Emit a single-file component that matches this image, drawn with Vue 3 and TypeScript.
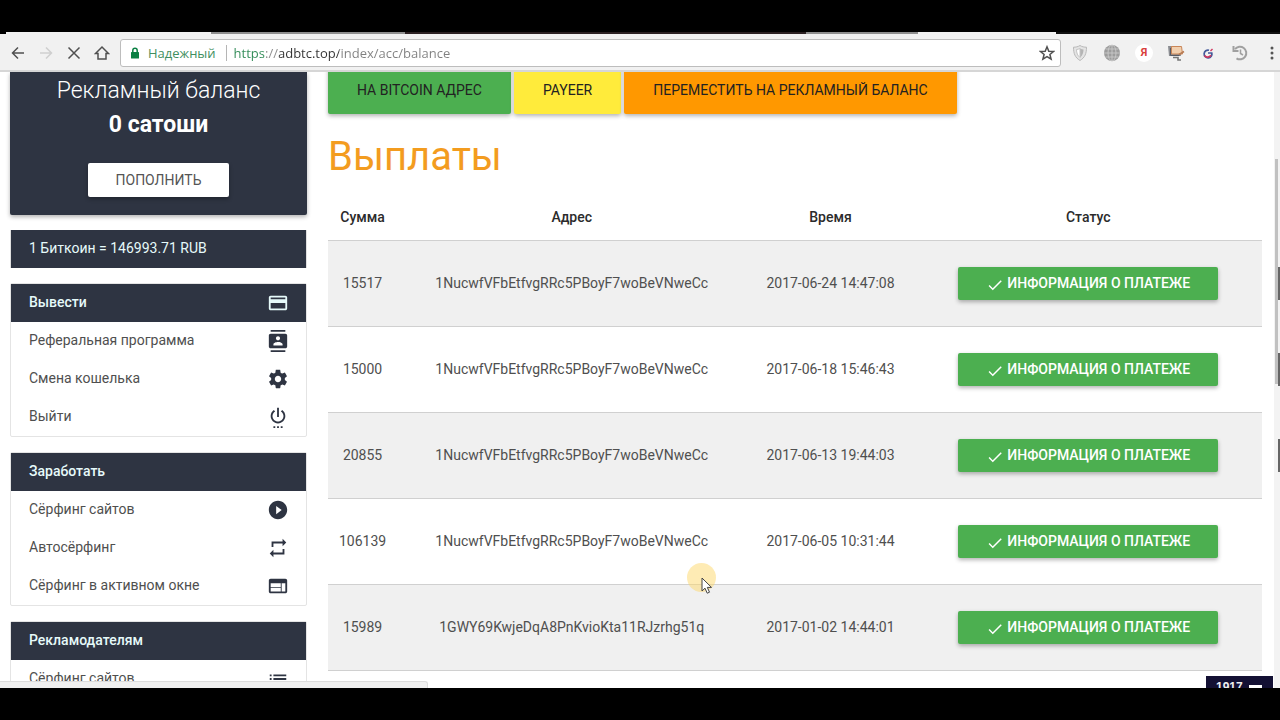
<script setup lang="ts">
import { ref } from 'vue'

interface MenuItem {
  label: string
  icon: string
}
interface MenuGroup {
  title: string
  icon?: string
  items: MenuItem[]
}
interface Payout {
  amount: string
  address: string
  time: string
}

const url = ref('https://adbtc.top/index/acc/balance')

const icons: Record<string, string> = {
  card: 'M20 4H4c-1.11 0-1.99.89-1.99 2L2 18c0 1.11.89 2 2 2h16c1.11 0 2-.89 2-2V6c0-1.11-.89-2-2-2zm0 14H4v-6h16v6zm0-10H4V6h16v2z',
  contacts: 'M20 0H4v2h16V0zM4 24h16v-2H4v2zM20 4H4c-1.1 0-2 .9-2 2v12c0 1.1.9 2 2 2h16c1.1 0 2-.9 2-2V6c0-1.1-.9-2-2-2zm-8 2.75c1.24 0 2.25 1.01 2.25 2.25s-1.01 2.25-2.25 2.25S9.75 10.24 9.75 9 10.76 6.75 12 6.75zM17 17H7v-1.5c0-1.67 3.33-2.5 5-2.5s5 .83 5 2.5V17z',
  settings: 'M19.43 12.98c.04-.32.07-.64.07-.98s-.03-.66-.07-.98l2.11-1.65c.19-.15.24-.42.12-.64l-2-3.46c-.12-.22-.39-.3-.61-.22l-2.49 1c-.52-.4-1.08-.73-1.69-.98l-.38-2.65C14.46 2.18 14.25 2 14 2h-4c-.25 0-.46.18-.49.42l-.38 2.65c-.61.25-1.17.59-1.69.98l-2.49-1c-.23-.09-.49 0-.61.22l-2 3.46c-.13.22-.07.49.12.64l2.11 1.65c-.04.32-.07.65-.07.98s.03.66.07.98l-2.11 1.65c-.19.15-.24.42-.12.64l2 3.46c.12.22.39.3.61.22l2.49-1c.52.4 1.08.73 1.69.98l.38 2.65c.03.24.24.42.49.42h4c.25 0 .46-.18.49-.42l.38-2.65c.61-.25 1.17-.59 1.69-.98l2.49 1c.23.09.49 0 .61-.22l2-3.46c.12-.22.07-.49-.12-.64l-2.11-1.65zM12 15.5c-1.93 0-3.5-1.57-3.5-3.5s1.57-3.5 3.5-3.5 3.5 1.57 3.5 3.5-1.57 3.5-3.5 3.5z',
  power: 'M7 24h2v-2H7v2zm4 0h2v-2h-2v2zm2-22h-2v10h2V2zm3.56 2.44l-1.45 1.45C16.84 6.94 18 8.83 18 11c0 3.31-2.69 6-6 6s-6-2.69-6-6c0-2.17 1.16-4.06 2.88-5.12L7.44 4.44C5.36 5.88 4 8.28 4 11c0 4.42 3.58 8 8 8s8-3.58 8-8c0-2.72-1.36-5.12-3.44-6.56zM15 24h2v-2h-2v2z',
  play: 'M12 2C6.48 2 2 6.48 2 12s4.48 10 10 10 10-4.48 10-10S17.52 2 12 2zm-2 14.5v-9l6 4.5-6 4.5z',
  repeat: 'M7 7h10v3l4-4-4-4v3H5v6h2V7zm10 10H7v-3l-4 4 4 4v-3h12v-6h-2v4z',
  web: 'M20 4H4c-1.1 0-1.99.9-1.99 2L2 18c0 1.1.9 2 2 2h16c1.1 0 2-.9 2-2V6c0-1.1-.9-2-2-2zm-5 14H4v-4h11v4zm0-5H4V9h11v4zm5 5h-4V9h4v9z',
  list: 'M3 13h2v-2H3v2zm0 4h2v-2H3v2zm0-8h2V7H3v2zm4 4h14v-2H7v2zm0 4h14v-2H7v2zM7 7v2h14V7H7z',
}

const groups: MenuGroup[] = [
  {
    title: 'Вывести',
    icon: 'card',
    items: [
      { label: 'Реферальная программа', icon: 'contacts' },
      { label: 'Смена кошелька', icon: 'settings' },
      { label: 'Выйти', icon: 'power' },
    ],
  },
  {
    title: 'Заработать',
    items: [
      { label: 'Сёрфинг сайтов', icon: 'play' },
      { label: 'Автосёрфинг', icon: 'repeat' },
      { label: 'Сёрфинг в активном окне', icon: 'web' },
    ],
  },
  {
    title: 'Рекламодателям',
    items: [{ label: 'Сёрфинг сайтов', icon: 'list' }],
  },
]

const payouts: Payout[] = [
  { amount: '15517', address: '1NucwfVFbEtfvgRRc5PBoyF7woBeVNweCc', time: '2017-06-24 14:47:08' },
  { amount: '15000', address: '1NucwfVFbEtfvgRRc5PBoyF7woBeVNweCc', time: '2017-06-18 15:46:43' },
  { amount: '20855', address: '1NucwfVFbEtfvgRRc5PBoyF7woBeVNweCc', time: '2017-06-13 19:44:03' },
  { amount: '106139', address: '1NucwfVFbEtfvgRRc5PBoyF7woBeVNweCc', time: '2017-06-05 10:31:44' },
  { amount: '15989', address: '1GWY69KwjeDqA8PnKvioKta11RJzrhg51q', time: '2017-01-02 14:44:01' },
]
</script>

<template>
  <div class="screen">
    <div class="browser">
      <div class="tabs-edge"></div>
      <header class="toolbar">
        <nav class="nav" aria-label="Навигация">
          <button class="tool" type="button" aria-label="Назад">
            <svg viewBox="0 0 16 16"><path d="M14 8H2.500M8 2.500 2.500 8 8 13.500" /></svg>
          </button>
          <button class="tool faded" type="button" aria-label="Вперёд">
            <svg viewBox="0 0 16 16"><path d="M2 8h11.500M8 2.500 13.500 8 8 13.500" /></svg>
          </button>
          <button class="tool" type="button" aria-label="Остановить">
            <svg viewBox="0 0 16 16"><path d="M2.500 2.500 13.500 13.500M13.500 2.500 2.500 13.500" /></svg>
          </button>
          <button class="tool" type="button" aria-label="Главная">
            <svg viewBox="0 0 16 16"><path d="M1.500 8.500 8 2l6.500 6.500H12V14H4V8.500z" /></svg>
          </button>
        </nav>
        <div class="omnibox">
          <svg class="lock" viewBox="0 0 10 12">
            <path d="M2.800 5.500V3.500a2.200 2.200 0 0 1 4.400 0v2" fill="none" stroke="#0b8043" stroke-width="1.500" />
            <rect x="1" y="5" width="8" height="6.500" rx="0.500" fill="#0b8043" />
          </svg>
          <span class="secure">Надежный</span>
          <input v-model="url" class="url" type="text" aria-label="Адрес страницы" />
          <button class="tool" type="button" aria-label="Добавить в закладки">
            <svg viewBox="0 0 16 16"><path d="M8 1.800 9.800 6.200 14.500 6.500 10.900 9.500 12.100 14.200 8 11.600 3.900 14.200 5.100 9.500 1.500 6.500 6.200 6.200z" /></svg>
          </button>
        </div>
        <div class="extensions">
          <button class="ext" type="button" aria-label="Щит">
            <svg viewBox="0 0 18 18">
              <path d="M9 1.500c2 1.300 4.200 1.700 6.500 1.700 0 6.300-1.500 10.300-6.500 13.300C4 13.500 2.500 9.500 2.500 3.200 4.800 3.200 7 2.800 9 1.500z" fill="#e4e4e4" stroke="#b9b9b9" />
              <path d="M9 4.500c1.200.6 2.400.9 3.500 1 0 3.500-1 6-3.500 8z" fill="#b4b4b4" />
              <path d="M9 4.500c-1.200.6-2.400.9-3.500 1 0 3.500 1 6 3.500 8z" fill="#fff" stroke="#c4c4c4" />
            </svg>
          </button>
          <button class="ext" type="button" aria-label="Прокси">
            <svg viewBox="0 0 18 18">
              <circle cx="9" cy="9" r="8" fill="#9c9c9c" />
              <g fill="none" stroke="#c9c9c9" stroke-width="0.900">
                <ellipse cx="9" cy="9" rx="4" ry="8" />
                <path d="M9 1v16M1 9h16M2.500 5h13M2.500 13h13" />
              </g>
            </svg>
          </button>
          <button class="ext yandex" type="button">Я</button>
          <button class="ext" type="button" aria-label="Экран">
            <svg viewBox="0 0 18 18">
              <path d="M1 2h12l1 10H2z" fill="#8b8d92" />
              <path d="M4.500 2.500h10l1 7.500h-11z" fill="#f1cfae" stroke="#c98557" />
              <path d="M3.500 4v7.500h9" fill="none" stroke="#555b66" />
              <path d="M12 10.500 17 7.500" stroke="#b77b54" stroke-width="1.500" />
              <path d="M6 13.500h5v2.500h3" fill="none" stroke="#777" stroke-width="1.600" />
            </svg>
          </button>
          <button class="ext" type="button" aria-label="Расширение">
            <svg viewBox="0 0 18 18">
              <path d="M10 6.200A3.900 3.900 0 1 0 12.800 9H9" fill="none" stroke="#43599a" stroke-width="1.700" />
              <path d="M5.500 11.500A4 4 0 0 0 12 11.300" fill="none" stroke="#d1365f" stroke-width="1.700" />
              <path d="M11.500 7 13.500 5" stroke="#d1365f" stroke-width="1.500" />
            </svg>
          </button>
          <button class="ext" type="button" aria-label="История">
            <svg viewBox="0 0 18 18" fill="none" stroke="#a0a0a0" stroke-width="2">
              <path d="M4 5.200A6.300 6.300 0 1 1 5.500 14.300" />
              <path d="M2.500 2v5h5" />
              <path d="M9.500 5.500V9.500l2.500 1.500" stroke-width="1.500" />
            </svg>
          </button>
          <button class="ext" type="button" aria-label="Меню">
            <svg viewBox="0 0 18 18" fill="#555">
              <circle cx="9" cy="4" r="1.500" /><circle cx="9" cy="9" r="1.500" /><circle cx="9" cy="14" r="1.500" />
            </svg>
          </button>
        </div>
      </header>

      <div class="viewport">
        <div class="page">
          <aside class="sidebar">
            <section class="balance">
              <h2>Рекламный баланс</h2>
              <strong>0 сатоши</strong>
              <button class="refill" type="button">ПОПОЛНИТЬ</button>
            </section>
            <p class="rate">1 Биткоин = 146993.71 RUB</p>
            <nav v-for="group in groups" :key="group.title" class="menu">
              <h3 class="menu-head">
                <a class="label" href="#">{{ group.title }}</a>
                <svg v-if="group.icon" viewBox="0 0 24 24"><path :d="icons[group.icon]" /></svg>
              </h3>
              <a v-for="item in group.items" :key="item.label" class="menu-item" href="#">
                <span class="label">{{ item.label }}</span>
                <svg viewBox="0 0 24 24"><path :d="icons[item.icon]" /></svg>
              </a>
            </nav>
          </aside>

          <main class="content">
            <div class="actions">
              <button class="action green" type="button">НА BITCOIN АДРЕС</button>
              <button class="action yellow" type="button">PAYEER</button>
              <button class="action orange" type="button">ПЕРЕМЕСТИТЬ НА РЕКЛАМНЫЙ БАЛАНС</button>
            </div>
            <h1>Выплаты</h1>
            <table>
              <thead>
                <tr>
                  <th class="c-amount">Сумма</th>
                  <th class="c-address">Адрес</th>
                  <th class="c-time">Время</th>
                  <th>Статус</th>
                </tr>
              </thead>
              <tbody>
                <tr v-for="row in payouts" :key="row.time">
                  <td>{{ row.amount }}</td>
                  <td>{{ row.address }}</td>
                  <td>{{ row.time }}</td>
                  <td>
                    <button class="info" type="button">
                      <svg viewBox="0 0 24 24"><path d="M9 16.200L4.800 12l-1.400 1.400L9 19 21 7l-1.400-1.400L9 16.200z" /></svg>
                      <span>ИНФОРМАЦИЯ О ПЛАТЕЖЕ</span>
                    </button>
                  </td>
                </tr>
              </tbody>
            </table>
          </main>
        </div>

        <div class="scrollbar"><div class="thumb"></div></div>
        <div class="edge"><i v-for="n in 3" :key="n"></i></div>
        <div class="status"></div>
        <div class="counter"><span>1917</span><i></i></div>
        <div class="pointer">
          <svg viewBox="0 0 12 18"><path d="M1 1v13l3-2.800 2.200 5 2.300-1-2.200-4.800h4.200z" /></svg>
        </div>
      </div>
    </div>
  </div>
</template>

<style>
body {
  background: #000;
}
</style>

<style scoped>
* {
  box-sizing: border-box;
}
button {
  margin: 0;
  padding: 0;
  border: 0;
  background: none;
  font: inherit;
  color: inherit;
}
a {
  color: inherit;
  text-decoration: none;
}
.screen {
  height: 100vh;
  padding: 32px 0;
  background: #000;
  font-family: Roboto, "Liberation Sans", sans-serif;
  font-size: 14px;
  color: #4f4f4f;
}
.browser {
  display: flex;
  flex-direction: column;
  height: 100%;
  overflow: hidden;
  background: #fff;
}
.tabs-edge {
  flex: none;
  height: 2px;
  background: linear-gradient(90deg, #000 0 6px, #f1f1f1 6px 211px, #8f8f8f 211px 405px, #2b2022 405px 806px, #8f8f8f 806px 918px, #f1f1f1 918px 1056px, #111 1056px);
}
.toolbar {
  display: flex;
  align-items: center;
  flex: none;
  height: 38px;
  padding: 1px 0 0 10px;
  border-bottom: 2px solid #d6d6d6;
  background: #f1f1f1;
}
.nav {
  display: flex;
  gap: 12px;
  margin-right: 10px;
}
.tool svg {
  display: block;
  width: 16px;
  height: 16px;
  fill: none;
  stroke: #505050;
  stroke-width: 1.5;
}
.tool.faded svg {
  stroke: #cfcfcf;
}
.omnibox {
  display: flex;
  align-items: center;
  flex: 1;
  height: 28px;
  padding: 0 5px 0 9px;
  border: 1px solid #bdbdbd;
  border-radius: 3px;
  background: #fff;
  font-family: "Open Sans", "Noto Sans", sans-serif;
  font-size: 13px;
}
.lock {
  width: 10px;
  height: 12px;
  margin-right: 8px;
}
.secure {
  margin-right: 7px;
  padding-right: 10px;
  border-right: 1px solid #b5b5b5;
  line-height: 16px;
  color: #3f8f5f;
}
.url {
  flex: 1;
  min-width: 0;
  padding: 0;
  border: 0;
  outline: 0;
  font: inherit;
  color: transparent;
  background: linear-gradient(90deg, #2f8a55 0 31px, #8a8a8a 31px 45px, #333 45px 105px, #808080 105px);
  background-clip: text;
  -webkit-background-clip: text;
}
.extensions {
  display: flex;
  align-items: center;
  gap: 14px;
  margin: 0 -1px 0 10px;
}
.ext {
  width: 18px;
  height: 18px;
}
.ext svg {
  display: block;
  width: 18px;
  height: 18px;
}
.yandex {
  border-radius: 50%;
  background: #fff;
  font-size: 11px;
  font-weight: 700;
  line-height: 18px;
  color: #d9413c;
}
.viewport {
  position: relative;
  flex: 1;
  min-height: 0;
  overflow: hidden;
}
.page {
  display: flex;
  gap: 21px;
  padding: 0 18px 0 10px;
}
.sidebar {
  display: flex;
  flex-direction: column;
  gap: 15px;
  flex: none;
  width: 297px;
}
.balance {
  display: flex;
  flex-direction: column;
  align-items: center;
  padding: 2px 0 18px;
  border-radius: 0 0 2px 2px;
  background: #2e3442;
  color: #fff;
  box-shadow: 0 2px 4px rgba(0, 0, 0, 0.3);
}
.balance h2 {
  margin: 0;
  font-size: 23px;
  font-weight: 300;
  line-height: 34px;
}
.balance strong {
  font-size: 23px;
  font-weight: 700;
  line-height: 34px;
}
.refill {
  height: 34px;
  margin-top: 21px;
  padding: 0 28px;
  border-radius: 2px;
  background: #fff;
  color: #555;
  box-shadow: 0 2px 4px rgba(0, 0, 0, 0.3);
}
.rate {
  margin: 0;
  padding: 0 18px 2px;
  border: solid #e0e0e0;
  border-width: 0 1px;
  background: #2e3442;
  line-height: 36px;
  color: #e6fafa;
}
.menu {
  border: 1px solid #e4e4e4;
  border-radius: 2px;
}
.menu-head,
.menu-item {
  display: flex;
  align-items: center;
  justify-content: space-between;
  height: 38px;
  margin: 0;
  padding: 0 17px 0 18px;
}
.menu-head {
  background: #2e3442;
  font-size: 14px;
  font-weight: 500;
  color: #e6fafa;
}
.label {
  padding-bottom: 2px;
}
.menu svg {
  width: 22px;
  height: 22px;
  fill: #2e3442;
}
.menu .menu-head svg {
  fill: #e6fafa;
}
.content {
  flex: 1;
  min-width: 0;
  margin-top: -6px;
}
.actions {
  display: flex;
  gap: 3px;
}
.action {
  height: 48px;
  padding: 0 29px;
  border-radius: 2px;
  color: #222;
  box-shadow: 0 2px 4px rgba(0, 0, 0, 0.3);
}
.green {
  background: #4caf50;
}
.yellow {
  background: #ffeb3b;
}
.orange {
  background: #ff9800;
}
h1 {
  margin: 19px 0 11px;
  font-size: 40px;
  font-weight: 400;
  line-height: 48px;
  color: #f39c1f;
}
table {
  width: 100%;
  border-collapse: collapse;
  table-layout: fixed;
  text-align: center;
}
th,
td {
  padding: 0;
  border-bottom: 1px solid #d0d0d0;
}
th {
  height: 48px;
  padding-top: 2px;
  font-weight: 500;
  color: #2b2b2b;
}
td {
  height: 86px;
}
tbody tr:nth-child(odd) {
  background: #f0f0f0;
}
.c-amount {
  width: 7.4%;
}
.c-address {
  width: 37.4%;
}
.c-time {
  width: 18%;
}
.info {
  display: inline-flex;
  align-items: center;
  gap: 3px;
  height: 33px;
  padding: 0 28px;
  border-radius: 2px;
  background: #4caf50;
  color: #fff;
  font-weight: 500;
  box-shadow: 0 2px 4px rgba(0, 0, 0, 0.3);
}
.info svg {
  width: 18px;
  height: 18px;
  margin-top: 3px;
  fill: #fff;
}
.scrollbar {
  position: absolute;
  top: 0;
  right: 0;
  bottom: 0;
  width: 6px;
  padding: 87px 2px 0 1px;
  background: #f3f3f3;
}
.thumb {
  height: 225px;
  background: #c1c1c1;
}
.edge {
  position: absolute;
  top: 195px;
  right: 0;
  display: grid;
  gap: 53px;
}
.edge i {
  width: 2px;
  height: 33px;
  background: #666;
}
.status {
  position: absolute;
  bottom: 0;
  left: 0;
  width: 428px;
  height: 7px;
  border: solid #dcdcdc;
  border-width: 1px 1px 0 0;
  border-radius: 0 3px 0 0;
  background: #f0f0f0;
}
.counter {
  position: absolute;
  right: 7px;
  bottom: 0;
  display: flex;
  gap: 6px;
  width: 67px;
  height: 12px;
  padding: 4px 0 0 10px;
  overflow: hidden;
  background: #131033;
  font-family: "Liberation Sans", sans-serif;
  font-size: 12px;
  font-weight: 700;
  line-height: 15px;
  color: #eee;
}
.counter i {
  width: 13px;
  height: 4px;
  margin-top: 5px;
  background: #fff;
}
.pointer {
  position: absolute;
  top: 491px;
  left: 687px;
  width: 29px;
  height: 29px;
  padding: 14px 0 0 14px;
  border-radius: 50%;
  background: rgba(253, 216, 106, 0.5);
}
.pointer svg {
  display: block;
  width: 12px;
  height: 18px;
  fill: #fff;
  stroke: #444;
}
</style>
